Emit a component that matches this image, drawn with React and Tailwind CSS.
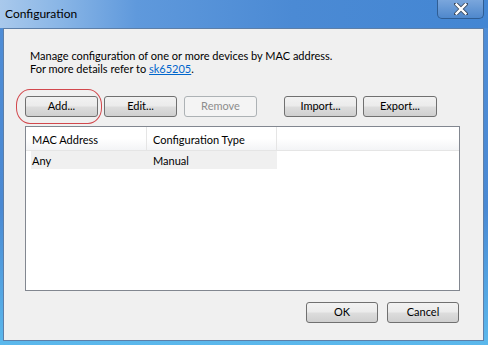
import React from "react";

const font = { fontFamily: 'Lato, "Noto Sans", sans-serif' };

function Btn({ children, w = "w-[73px]", disabled = false }) {
  return (
    <div
      className={`${w} h-[21px] shrink-0 rounded-[3px] border flex items-center justify-center text-[11px] ${
        disabled
          ? "border-[#adb2b5] bg-[#f4f4f4] text-[#8d8d8d]"
          : "border-[#707070] bg-[linear-gradient(to_bottom,#f2f2f2_0%,#ebebeb_48%,#dddddd_52%,#cfcfcf_100%)] text-black"
      }`}
    >
      {children}
    </div>
  );
}

export default function App() {
  return (
    <div
      className="w-[488px] h-[345px] flex flex-col bg-[linear-gradient(to_bottom,#4f8dd6_0%,#4a89d3_60%,#5bb8ec_100%)] overflow-hidden"
      style={font}
    >
      <div className="h-[28px] shrink-0 flex items-start justify-between bg-[linear-gradient(to_right,#a9c9ec_0%,#8ab6e6_12%,#5f99dc_28%,#4b8ad4_60%,#4386d3_100%)]">
        <div className="pl-[5px] pt-[6px] text-[12px] leading-[16px] text-black">Configuration</div>
        <div className="mr-[4px] w-[47px] h-[19px] rounded-b-[5px] border border-t-0 border-[#2f5d93] bg-[linear-gradient(to_bottom,#7aa6dc,#4f88cc)] flex items-center justify-center">
          <svg width="14" height="12" viewBox="0 0 14 12">
            <path d="M2 1 L12 11 M12 1 L2 11" stroke="#3a4a60" strokeWidth="4" strokeLinecap="square" />
            <path d="M2.5 1.5 L11.5 10.5 M11.5 1.5 L2.5 10.5" stroke="#ffffff" strokeWidth="2.4" strokeLinecap="square" />
          </svg>
        </div>
      </div>
      <div className="flex-1 ml-[3px] mr-[4px] mb-[4px] border border-[#5d7fa8] bg-[#f0f0f0] flex flex-col pl-[21px] pr-[22px] pt-[20px]">
        <div className="ml-[5px] text-[11px] leading-[13px] text-black">
          <div>Manage configuration of one or more devices by MAC address.</div>
          <div>
            For more details refer to <span className="text-[#0066cc] underline">sk65205</span>.
          </div>
        </div>
        <div className="mt-[21px] flex items-center">
          <div className="relative">
            <Btn>Add...</Btn>
            <div className="absolute left-[-9px] top-[-7px] w-[86px] h-[35px] rounded-[14px/16px] border border-[#d2484d]" />
          </div>
          <div className="ml-[6px]">
            <Btn>Edit...</Btn>
          </div>
          <div className="ml-[7px]">
            <Btn disabled>Remove</Btn>
          </div>
          <div className="ml-[27px]">
            <Btn>Import...</Btn>
          </div>
          <div className="ml-[6px]">
            <Btn w="w-[74px]">Export...</Btn>
          </div>
        </div>
        <div className="mt-[9px] w-[435px] h-[165px] border border-[#828790] bg-white flex flex-col text-[11px] text-black">
          <div className="h-[24px] flex bg-[linear-gradient(to_bottom,#ffffff_0%,#ffffff_50%,#f3f4f6_100%)] border-b border-[#e5e5e5]">
            <div className="w-[121px] pl-[6px] pt-[3px] flex items-center border-r border-[#e5e5e5]">MAC Address</div>
            <div className="w-[130px] pl-[6px] pt-[3px] flex items-center border-r border-[#e5e5e5]">Configuration Type</div>
            <div className="flex-1" />
          </div>
          <div className="ml-[5px] w-[246px] h-[18px] pt-[2px] flex bg-[#f0f0f0] items-center">
            <div className="w-[116px] pl-[1px]">Any</div>
            <div className="pl-[6px]">Manual</div>
          </div>
        </div>
        <div className="mt-[11px] flex justify-end pr-[2px]">
          <Btn w="w-[72px]">OK</Btn>
          <div className="ml-[9px]">
            <Btn w="w-[72px]">Cancel</Btn>
          </div>
        </div>
      </div>
    </div>
  );
}
